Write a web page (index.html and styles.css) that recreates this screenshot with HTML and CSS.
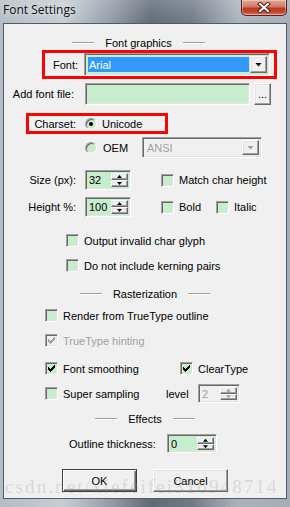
FILE: index.html
```html
<!DOCTYPE html>
<html lang="en">
<head>
<meta charset="utf-8">
<title>Font Settings</title>
<link rel="stylesheet" href="styles.css">
</head>
<body>
<div class="window">
  <div class="titlebar">
    <span class="title">Font Settings</span>
    <div class="close">
      <svg width="14" height="11" viewBox="0 0 14 11"><path d="M3 2 L11 9 M11 2 L3 9" stroke="#4a1d16" stroke-width="4" stroke-linecap="square"/><path d="M3 2 L11 9 M11 2 L3 9" stroke="#ffffff" stroke-width="2" stroke-linecap="square"/></svg>
    </div>
  </div>
  <div class="client">
    <div class="heading heading-first"><span class="rule"></span><span>Font graphics</span><span class="rule"></span></div>

    <div class="row row-font">
      <div class="mark mark-font">
        <span class="lbl-font">Font:</span>
        <div class="combo combo-font sunken">
          <div class="combo-text selected">Arial</div>
          <div class="dd raised"><i class="tri"></i></div>
        </div>
      </div>
    </div>

    <div class="row row-file">
      <span class="lbl-col lbl-file">Add font file:</span>
      <div class="edit edit-file sunken"></div>
      <div class="btn-browse raised">...</div>
    </div>

    <div class="row row-charset">
      <div class="mark mark-charset">
        <span class="lbl-charset">Charset:</span>
        <span class="radio radio-on"></span>
        <span class="rtext">Unicode</span>
      </div>
    </div>

    <div class="row row-oem">
      <span class="radio"></span>
      <span class="rtext rtext-oem">OEM</span>
      <div class="combo combo-ansi sunken disabled">
        <div class="combo-text">ANSI</div>
        <div class="dd raised"><i class="tri"></i></div>
      </div>
    </div>

    <div class="row row-size">
      <span class="lbl-col">Size (px):</span>
      <div class="spin spin-std sunken">
        <div class="spin-field">32</div>
        <div class="spin-btns"><span class="sb raised"><i class="up"></i></span><span class="sb raised"><i class="dn"></i></span></div>
      </div>
      <div class="cb cb-match"><span class="chk sunken"></span><span>Match char height</span></div>
    </div>

    <div class="row row-height">
      <span class="lbl-col">Height %:</span>
      <div class="spin spin-std sunken">
        <div class="spin-field">100</div>
        <div class="spin-btns"><span class="sb raised"><i class="up"></i></span><span class="sb raised"><i class="dn"></i></span></div>
      </div>
      <div class="cb cb-bold"><span class="chk sunken"></span><span>Bold</span></div>
      <div class="cb"><span class="chk sunken"></span><span>Italic</span></div>
    </div>

    <div class="row row-invalid">
      <div class="cb"><span class="chk sunken"></span><span>Output invalid char glyph</span></div>
    </div>

    <div class="row row-kern">
      <div class="cb"><span class="chk sunken"></span><span>Do not include kerning pairs</span></div>
    </div>

    <div class="heading heading-raster"><span class="rule"></span><span>Rasterization</span><span class="rule"></span></div>

    <div class="row row-render">
      <div class="cb"><span class="chk sunken"></span><span>Render from TrueType outline</span></div>
    </div>

    <div class="row row-hint">
      <div class="cb cb-disabled"><span class="chk sunken"><svg class="tick" width="11" height="11" viewBox="0 0 11 11"><path d="M2 4H3V5H4V6H5V5H6V4H7V3H8V2H9V5H8V6H7V7H6V8H5V9H4V8H3V7H2Z"/></svg></span><span>TrueType hinting</span></div>
    </div>

    <div class="row row-smooth">
      <div class="cb cb-smooth"><span class="chk sunken"><svg class="tick" width="11" height="11" viewBox="0 0 11 11"><path d="M2 4H3V5H4V6H5V5H6V4H7V3H8V2H9V5H8V6H7V7H6V8H5V9H4V8H3V7H2Z"/></svg></span><span>Font smoothing</span></div>
      <div class="cb"><span class="chk sunken"><svg class="tick" width="11" height="11" viewBox="0 0 11 11"><path d="M2 4H3V5H4V6H5V5H6V4H7V3H8V2H9V5H8V6H7V7H6V8H5V9H4V8H3V7H2Z"/></svg></span><span>ClearType</span></div>
    </div>

    <div class="row row-super">
      <div class="cb cb-super"><span class="chk sunken"></span><span>Super sampling</span></div>
      <span class="lbl-level">level</span>
      <div class="spin spin-level sunken disabled">
        <div class="spin-field">2</div>
        <div class="spin-btns"><span class="sb raised"><i class="up"></i></span><span class="sb raised"><i class="dn"></i></span></div>
      </div>
    </div>

    <div class="heading heading-effects"><span class="rule"></span><span>Effects</span><span class="rule"></span></div>

    <div class="row row-outline">
      <span class="lbl-outline">Outline thickness:</span>
      <div class="spin spin-outline sunken">
        <div class="spin-field">0</div>
        <div class="spin-btns"><span class="sb raised"><i class="up"></i></span><span class="sb raised"><i class="dn"></i></span></div>
      </div>
    </div>

    <div class="row row-buttons">
      <div class="pbtn pbtn-default">OK</div>
      <div class="pbtn raised">Cancel</div>
    </div>
  </div>
  <div class="watermark">csdn.net/xiefeifei316948714</div>
</div>
</body>
</html>
```
FILE: styles.css
```css
* { box-sizing: border-box; }
html, body { margin: 0; padding: 0; }
body {
  font-family: "Liberation Sans", Arial, sans-serif;
  font-size: 11px;
  color: #000;
  background: #ffffff;
}

.window {
  position: relative;
  width: 290px;
  height: 507px;
  display: flex;
  flex-direction: column;
  overflow: hidden;
  background:
    linear-gradient(180deg, rgba(255,255,255,0.18) 0, rgba(255,255,255,0) 24px),
    linear-gradient(90deg, #b4bcc4 0%, #c6cdd3 22%, #939da8 38%, #5f6a77 52%, #6f7a87 66%, #aab3bb 82%, #a4adb6 100%);
}

/* title bar */
.titlebar {
  height: 23px;
  flex: none;
  display: flex;
  justify-content: space-between;
  align-items: flex-start;
  padding: 0 3px 0 3px;
}
.title {
  font-family: "Open Sans", "Noto Sans", sans-serif;
  font-size: 12px;
  line-height: 16px;
  margin-top: 2px;
  color: #111;
  text-shadow: 0 0 6px rgba(255,255,255,0.8);
}
.close {
  width: 46px;
  height: 16px;
  display: flex;
  align-items: center;
  justify-content: center;
  border: 1px solid #5e2219;
  border-top: none;
  border-radius: 0 0 5px 5px;
  background: linear-gradient(180deg, #e2a597 0%, #d47f6c 42%, #bd3a22 56%, #c2452c 80%, #d9846c 100%);
  box-shadow: inset 0 0 0 1px rgba(255,255,255,0.35);
}

/* client area */
.client {
  flex: 1;
  margin: 0 3px 8px 3px;
  background: #f0f0f0;
  border: 1px solid #4f5b67;
  display: flex;
  flex-direction: column;
}

/* 3D edges */
.sunken {
  border: 1px solid;
  border-color: #a0a0a0 #ffffff #ffffff #a0a0a0;
  box-shadow: inset 1px 1px #696969, inset -1px -1px #e3e3e3;
}
.raised {
  background: #f0f0f0;
  border: 1px solid;
  border-color: #ffffff #696969 #696969 #ffffff;
  box-shadow: inset -1px -1px #a0a0a0, inset 1px 1px #e3e3e3;
}

/* headings */
.heading {
  display: flex;
  align-items: center;
  justify-content: center;
  gap: 11px;
  height: 14px;
  flex: none;
}
.rule {
  width: 22px;
  height: 2px;
  border-top: 1px solid #a0a0a0;
  border-bottom: 1px solid #ffffff;
}
.heading-first { margin-top: 11px; height: 15px; padding-right: 13px; }
.heading-raster { margin-top: 15px; }
.heading-effects { margin-top: 9px; }

/* rows */
.row {
  display: flex;
  align-items: center;
  flex: none;
}
.row-font { height: 29px; padding-left: 38px; }
.row-file { height: 22px; margin-top: 4px; }
.row-charset { height: 21px; margin-top: 8px; padding-left: 22px; }
.row-oem { height: 21px; margin-top: 3px; padding-left: 81px; }
.row-size { height: 20px; margin-top: 12px; }
.row-height { height: 20px; margin-top: 7px; }
.row-invalid { height: 13px; margin-top: 17px; padding-left: 62px; }
.row-kern { height: 13px; margin-top: 12px; padding-left: 62px; }
.row-render { height: 13px; margin-top: 8px; padding-left: 41px; }
.row-hint { height: 13px; margin-top: 12px; padding-left: 41px; }
.row-smooth { height: 13px; margin-top: 15px; padding-left: 41px; }
.row-super { height: 19px; margin-top: 9px; padding-left: 41px; }
.row-outline { height: 19px; margin-top: 8px; padding-left: 65px; }
.row-buttons { height: 23px; margin-top: 16px; padding-left: 58px; gap: 16px; }

/* red highlight boxes */
.mark {
  display: flex;
  align-items: center;
  border: 3px solid #ff0000;
}
.mark-font { width: 235px; height: 29px; padding: 0 4px 0 8px; gap: 8px; }
.mark-charset { width: 142px; height: 21px; padding-left: 0; }

.lbl-font { width: 23px; text-align: right; }
.lbl-charset { width: 47px; text-align: right; }
.lbl-col { width: 72px; text-align: right; flex: none; }
.lbl-file { padding-right: 2px; }

/* combo boxes */
.combo {
  display: flex;
  align-items: stretch;
  padding: 2px;
  background: #c7edcc;
}
.combo-font { width: 186px; height: 23px; }
.combo-text {
  flex: 1;
  display: flex;
  align-items: center;
  padding-left: 2px;
}
.combo-text.selected {
  margin: 1px;
  padding-left: 1px;
  background: #3399ff;
  color: #ffffff;
}
.dd {
  width: 17px;
  display: flex;
  align-items: center;
  justify-content: center;
}
.tri {
  display: block;
  width: 7px;
  height: 4px;
  background: #000;
  clip-path: polygon(0 0, 100% 0, 50% 100%);
}
.combo-ansi { width: 120px; height: 21px; margin-left: 0; }
.disabled { background: #f0f0f0; color: #a0a0a0; }
.disabled .tri { background: #a0a0a0; }

/* edit */
.edit-file {
  width: 165px;
  height: 22px;
  margin-left: 9px;
  background: #c7edcc;
}
.btn-browse {
  width: 17px;
  height: 22px;
  margin-left: 4px;
  display: flex;
  align-items: flex-end;
  justify-content: center;
  padding-bottom: 4px;
  line-height: 11px;
}

/* radio */
.radio {
  width: 12px;
  height: 12px;
  flex: none;
  border-radius: 50%;
  border: 1px solid;
  border-color: #a0a0a0 #ffffff #ffffff #a0a0a0;
  box-shadow: inset 1px 1px #696969;
  background: #c7edcc;
  position: relative;
}
.mark-charset .radio { margin-left: 9px; }
.radio-on::after {
  content: "";
  position: absolute;
  left: 3px;
  top: 3px;
  width: 4px;
  height: 4px;
  border-radius: 50%;
  background: #000;
}
.rtext { margin-left: 5px; }
.rtext-oem { width: 39px; margin-left: 6px; }

/* spinner */
.spin {
  display: flex;
  padding: 2px;
  background: #c7edcc;
}
.spin-std { width: 46px; height: 20px; margin-left: 9px; }
.spin-level { width: 42px; height: 19px; background: #f0f0f0; }
.spin-outline { width: 50px; height: 19px; }
.spin-field {
  flex: 1;
  display: flex;
  align-items: center;
  padding-left: 1px;
}
.spin-btns {
  width: 17px;
  display: flex;
  flex-direction: column;
}
.sb {
  flex: 1;
  display: flex;
  align-items: center;
  justify-content: center;
}
.up, .dn {
  display: block;
  width: 5px;
  height: 3px;
  background: #000;
}
.up { clip-path: polygon(50% 0, 100% 100%, 0 100%); }
.dn { clip-path: polygon(0 0, 100% 0, 50% 100%); }
.spin.disabled .up, .spin.disabled .dn { background: #a0a0a0; }

/* checkboxes */
.cb {
  display: flex;
  align-items: center;
  gap: 5px;
  flex: none;
}
.chk {
  width: 13px;
  height: 13px;
  flex: none;
  position: relative;
  background: #c7edcc;
}
.tick {
  position: absolute;
  left: 0;
  top: 0;
  fill: #000;
  shape-rendering: crispEdges;
}
.cb-disabled { color: #a0a0a0; }
.cb-disabled .chk { background: #f0f0f0; }
.cb-disabled .tick { fill: #a0a0a0; }
.cb-match { margin-left: 30px; }
.cb-bold { margin-left: 30px; width: 55px; }
.cb-smooth { width: 135px; }
.cb-super { width: 121px; }

.lbl-level { width: 32px; }
.lbl-outline { width: 98px; }

/* push buttons */
.pbtn {
  width: 75px;
  height: 23px;
  display: flex;
  align-items: center;
  justify-content: center;
}
.pbtn-default {
  background: #f0f0f0;
  border: 1px solid #3c3c3c;
  box-shadow: inset 1px 1px #ffffff, inset -1px -1px #696969, inset -2px -2px #a0a0a0;
}

/* watermark overlay */
.watermark {
  position: absolute;
  left: 5px;
  top: 476px;
  font-family: "Liberation Serif", serif;
  font-size: 19px;
  letter-spacing: 2.1px;
  color: rgba(140, 140, 140, 0.26);
  white-space: nowrap;
  pointer-events: none;
}
```
